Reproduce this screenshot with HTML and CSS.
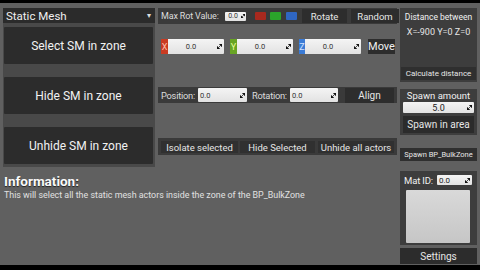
FILE: index.html
```html
<!DOCTYPE html>
<html>
<head>
<meta charset="utf-8">
<link rel="stylesheet" href="styles.css">
</head>
<body>
<div class="app">
  <div class="main">
    <div class="top">
      <div class="left">
        <div class="dropdown"><span>Static Mesh</span><span class="caret">&#9662;</span></div>
        <div class="bigpanel">
          <div class="bigbtn">Select SM in zone</div>
          <div class="bigbtn">Hide SM in zone</div>
          <div class="bigbtn">Unhide SM in zone</div>
        </div>
      </div>
      <div class="middle">
        <div class="row1">
          <span class="lbl lbl-max">Max Rot Value:</span>
          <div class="inp inp-tiny"><span>0.0</span><svg class="rz" viewBox="0 0 6 6"><path d="M6 0L6 3.2L2.8 0Z M0 6L0 2.8L3.2 6Z M1.6 4.4L4.4 1.6" fill="#111" stroke="#111" stroke-width="0.9"/></svg></div>
          <span class="sq sq-r"></span>
          <span class="sq sq-g"></span>
          <span class="sq sq-b"></span>
          <div class="btn btn-rotate">Rotate</div>
          <div class="btn btn-random">Random</div>
        </div>
        <div class="row2">
          <span class="tag tag-x">X</span>
          <div class="inp inp-vec"><span>0.0</span><svg class="rz" viewBox="0 0 6 6"><path d="M6 0L6 3.2L2.8 0Z M0 6L0 2.8L3.2 6Z M1.6 4.4L4.4 1.6" fill="#111" stroke="#111" stroke-width="0.9"/></svg></div>
          <span class="tag tag-y">Y</span>
          <div class="inp inp-vec"><span>0.0</span><svg class="rz" viewBox="0 0 6 6"><path d="M6 0L6 3.2L2.8 0Z M0 6L0 2.8L3.2 6Z M1.6 4.4L4.4 1.6" fill="#111" stroke="#111" stroke-width="0.9"/></svg></div>
          <span class="tag tag-z">Z</span>
          <div class="inp inp-vec"><span>0.0</span><svg class="rz" viewBox="0 0 6 6"><path d="M6 0L6 3.2L2.8 0Z M0 6L0 2.8L3.2 6Z M1.6 4.4L4.4 1.6" fill="#111" stroke="#111" stroke-width="0.9"/></svg></div>
          <div class="btn btn-move">Move</div>
        </div>
        <div class="row3">
          <span class="lbl lbl-pos">Position:</span>
          <div class="inp inp-left inp-pos"><span>0.0</span><svg class="rz" viewBox="0 0 6 6"><path d="M6 0L6 3.2L2.8 0Z M0 6L0 2.8L3.2 6Z M1.6 4.4L4.4 1.6" fill="#111" stroke="#111" stroke-width="0.9"/></svg></div>
          <span class="lbl lbl-rot">Rotation:</span>
          <div class="inp inp-left inp-rot"><span>0.0</span><svg class="rz" viewBox="0 0 6 6"><path d="M6 0L6 3.2L2.8 0Z M0 6L0 2.8L3.2 6Z M1.6 4.4L4.4 1.6" fill="#111" stroke="#111" stroke-width="0.9"/></svg></div>
          <div class="btn btn-align">Align</div>
        </div>
        <div class="row4">
          <div class="btn btn-iso">Isolate selected</div>
          <div class="btn btn-hide">Hide Selected</div>
          <div class="btn btn-unhide">Unhide all actors</div>
        </div>
      </div>
    </div>
    <div class="info">
      <div class="info-title">Information:</div>
      <div class="info-text">This will select all the static mesh actors inside the zone of the BP_BulkZone</div>
    </div>
  </div>
  <div class="right">
    <div class="panel dist">
      <div class="dist-title">Distance between</div>
      <div class="dist-val">X=-900 Y=0 Z=0</div>
      <div class="btn btn-calc">Calculate distance</div>
    </div>
    <div class="panel spawn">
      <div class="spawn-title">Spawn amount</div>
      <div class="inp inp-spawn"><span>5.0</span><svg class="rz" viewBox="0 0 6 6"><path d="M6 0L6 3.2L2.8 0Z M0 6L0 2.8L3.2 6Z M1.6 4.4L4.4 1.6" fill="#111" stroke="#111" stroke-width="0.9"/></svg></div>
      <div class="btn btn-spawnarea">Spawn in area</div>
    </div>
    <div class="btn btn-bp">Spawn BP_BulkZone</div>
    <div class="panel mat">
      <div class="mat-row">
        <span class="lbl lbl-mat">Mat ID:</span>
        <div class="inp inp-mat"><span>0.0</span><svg class="rz" viewBox="0 0 6 6"><path d="M6 0L6 3.2L2.8 0Z M0 6L0 2.8L3.2 6Z M1.6 4.4L4.4 1.6" fill="#111" stroke="#111" stroke-width="0.9"/></svg></div>
      </div>
      <div class="swatch"></div>
    </div>
    <div class="btn btn-settings">Settings</div>
  </div>
</div>
</body>
</html>
```
FILE: styles.css
```css
html, body {
  margin: 0;
  padding: 0;
  background: #000;
  font-family: Roboto, "Liberation Sans", sans-serif;
  color: #e6e6e6;
}
.app {
  margin-top: 3px;
  height: 262px;
  background: #606060;
  display: flex;
  padding: 5px 3px 0 3px;
  box-sizing: border-box;
  width: 480px;
}
.main {
  width: 394px;
  margin-right: 3px;
  display: flex;
  flex-direction: column;
}
.top {
  display: flex;
  gap: 3px;
}
.left {
  width: 152px;
  display: flex;
  flex-direction: column;
}
.dropdown {
  height: 15px;
  background: #2b2b2b;
  display: flex;
  align-items: center;
  justify-content: space-between;
  padding: 0 4px 0 3px;
  font-size: 11.5px;
  color: #f0f0f0;
  box-sizing: border-box;
}
.caret {
  font-size: 8px;
  color: #ddd;
}
.bigpanel {
  background: #494949;
  padding: 4px 2px 3px 1px;
  display: flex;
  flex-direction: column;
  gap: 13px;
}
.bigbtn {
  height: 37px;
  background: #2c2c2c;
  display: flex;
  align-items: center;
  justify-content: center;
  font-size: 12px;
  color: #f2f2f2;
  border-radius: 1px;
}
.middle {
  width: 239px;
  display: flex;
  flex-direction: column;
}
.lbl {
  font-size: 9px;
  letter-spacing: -0.15px;
  color: #dcdcdc;
  white-space: nowrap;
  flex-shrink: 0;
}
.btn {
  background: #2d2d2d;
  display: flex;
  align-items: center;
  justify-content: center;
  color: #e6e6e6;
  white-space: nowrap;
  box-sizing: border-box;
  flex-shrink: 0;
}
.inp {
  background: linear-gradient(#f4f4f4, #e2e2e2);
  border-radius: 1px;
  display: flex;
  align-items: center;
  justify-content: center;
  position: relative;
  font-size: 7.5px;
  color: #333;
  box-sizing: border-box;
  flex-shrink: 0;
}
.rz {
  position: absolute;
  right: 2px;
  top: 50%;
  width: 5px;
  height: 5px;
  margin-top: -2.5px;
}
.row1 {
  height: 16px;
  background: #3a3a3a;
  display: flex;
  align-items: center;
  padding: 0 2px 0 3px;
}
.lbl-max {
  width: 64px;
}
.inp-tiny {
  width: 21px;
  height: 9px;
  padding-right: 5px;
  font-size: 7px;
}
.inp-tiny .rz {
  right: 1px;
  width: 4px;
  height: 4px;
  margin-top: -2px;
}
.sq {
  width: 11px;
  height: 8px;
  border-radius: 1px;
  flex-shrink: 0;
}
.sq-r {
  background: #a8291e;
  margin-left: 9px;
}
.sq-g {
  background: #2ba42b;
  margin-left: 4px;
}
.sq-b {
  background: #2f66c2;
  margin-left: 5px;
}
.btn-rotate {
  width: 45px;
  height: 14px;
  margin-left: 5px;
  font-size: 9.5px;
}
.btn-random {
  width: 48px;
  height: 14px;
  margin-left: 4px;
  font-size: 9.5px;
}
.row2 {
  margin-top: 15px;
  height: 15px;
  display: flex;
  align-items: stretch;
  padding-left: 3px;
}
.tag {
  width: 7px;
  display: flex;
  align-items: center;
  justify-content: center;
  font-size: 9px;
  flex-shrink: 0;
}
.tag-x {
  background: #c93b22;
  color: #ffc0b0;
}
.tag-y {
  background: #68a424;
  color: #e6ff9a;
  margin-left: 6px;
}
.tag-z {
  background: #3a7bd6;
  color: #d0e2ff;
  margin-left: 6px;
  width: 6px;
}
.inp-vec {
  width: 56px;
  padding-right: 10px;
  border-radius: 0 1px 1px 0;
}
.btn-move {
  width: 27px;
  margin-left: 7px;
  font-size: 11px;
  color: #f0f0f0;
}
.row3 {
  margin-top: 33px;
  height: 16px;
  background: #3a3a3a;
  display: flex;
  align-items: center;
  padding-left: 3px;
}
.lbl-pos {
  width: 37px;
  font-size: 9.3px;
  letter-spacing: -0.25px;
}
.lbl-rot {
  width: 38px;
  margin-left: 5px;
  font-size: 9.3px;
  letter-spacing: -0.25px;
}
.inp-left {
  height: 14px;
  justify-content: flex-start;
  padding-left: 2px;
  font-size: 7.5px;
}
.inp-pos {
  width: 49px;
}
.inp-rot {
  width: 48px;
}
.btn-align {
  width: 49px;
  height: 15px;
  margin-left: 7px;
  font-size: 10px;
}
.row4 {
  margin-top: 35px;
  height: 17px;
  background: #3a3a3a;
  display: flex;
  padding: 3px 2px 2px 3px;
  box-sizing: border-box;
  gap: 2px;
}
.row4 .btn {
  font-size: 9.5px;
  background: #303030;
}
.btn-iso {
  width: 77px;
}
.btn-hide {
  width: 75px;
}
.btn-unhide {
  width: 76px;
  margin-left: 1px;
}
.info {
  margin-top: 6px;
  padding-left: 1px;
}
.info-title {
  font-size: 13.5px;
  font-weight: bold;
  color: #fafafa;
  line-height: 16px;
  text-shadow: 0 1px 1px #222;
}
.info-text {
  font-size: 8.9px;
  color: #e0e0e0;
  line-height: 10px;
  margin-top: 1px;
}
.right {
  width: 77px;
  display: flex;
  flex-direction: column;
}
.panel {
  background: #3d3d3d;
  box-sizing: border-box;
}
.dist {
  height: 74px;
  display: flex;
  flex-direction: column;
  align-items: center;
  padding: 4px 1px 2px 1px;
}
.dist-title {
  font-size: 8.5px;
  color: #f0f0f0;
  line-height: 11px;
}
.dist-val {
  font-size: 9px;
  color: #e6e6e6;
  margin-top: 4px;
  line-height: 11px;
}
.btn-calc {
  margin-top: auto;
  width: 75px;
  height: 13px;
  font-size: 8px;
  background: #2f2f2f;
}
.spawn {
  margin-top: 7px;
  height: 46px;
  display: flex;
  flex-direction: column;
  align-items: center;
  padding: 1px 3px 2px 3px;
}
.spawn-title {
  font-size: 9.5px;
  line-height: 12px;
  color: #f0f0f0;
}
.inp-spawn {
  width: 71px;
  height: 11px;
  font-size: 9px;
  color: #222;
}
.btn-spawnarea {
  margin-top: 3px;
  width: 71px;
  height: 17px;
  font-size: 10px;
  background: #2b2b2b;
}
.btn-bp {
  margin-top: 13px;
  height: 13px;
  font-size: 7.5px;
  background: #2f2f2f;
}
.mat {
  margin-top: 10px;
  height: 74px;
  padding: 4px 4px 0 6px;
  display: flex;
  flex-direction: column;
}
.mat-row {
  display: flex;
  align-items: center;
  height: 10px;
}
.lbl-mat {
  width: 33px;
  font-size: 9.5px;
  margin-left: -2px;
  color: #f0f0f0;
}
.inp-mat {
  width: 35px;
  height: 10px;
  justify-content: flex-start;
  padding-left: 2px;
  font-size: 8px;
  color: #222;
}
.swatch {
  margin-top: 5px;
  width: 64px;
  height: 53px;
  background: linear-gradient(#d9d9d9, #c6c6c6);
  border-radius: 1px;
}
.btn-settings {
  margin-top: 3px;
  height: 16px;
  font-size: 10px;
  background: #2c2c2c;
}
```
